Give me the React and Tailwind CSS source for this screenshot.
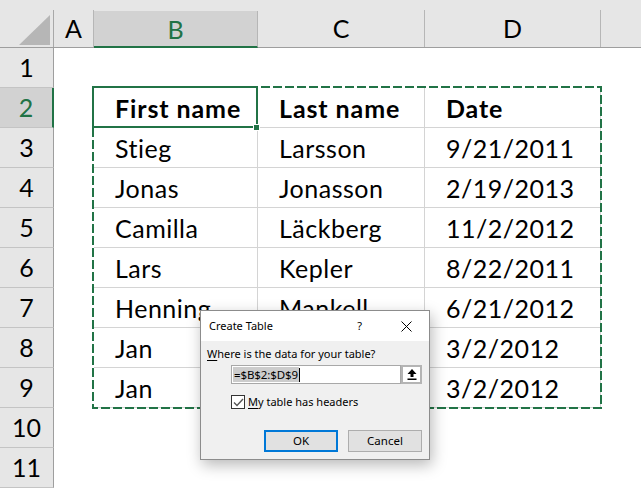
const GREEN = "#217346";

const rows = [
  { n: 1, cells: ["", "", ""] },
  { n: 2, cells: ["First name", "Last name", "Date"], bold: true },
  { n: 3, cells: ["Stieg", "Larsson", "9/21/2011"] },
  { n: 4, cells: ["Jonas", "Jonasson", "2/19/2013"] },
  { n: 5, cells: ["Camilla", "Läckberg", "11/2/2012"] },
  { n: 6, cells: ["Lars", "Kepler", "8/22/2011"] },
  { n: 7, cells: ["Henning", "Mankell", "6/21/2012"] },
  { n: 8, cells: ["Jan", "", "3/2/2012"] },
  { n: 9, cells: ["Jan", "", "3/2/2012"] },
  { n: 10, cells: ["", "", ""] },
  { n: 11, cells: ["", "", ""] },
];

const colWidths = ["w-[164px]", "w-[167px]", "w-[176px]"];

const Dialog = () => (
  <div className="absolute left-[200px] top-[310px] w-[230px] h-[150px] border border-[#8c8c8c] bg-[#f0f0f0] shadow-[2px_5px_14px_rgba(0,0,0,0.28)] font-['Noto_Sans'] text-[11px] text-black flex flex-col">
    <div className="h-[30px] bg-white flex items-center pl-[8px] pr-[17px] shrink-0">
      <span>Create Table</span>
      <span className="ml-auto mr-[39px]">?</span>
      <svg width="11" height="11" viewBox="0 0 11 11">
        <path d="M0.5 0.5 L10.5 10.5 M10.5 0.5 L0.5 10.5" stroke="#000" strokeWidth="1" fill="none" />
      </svg>
    </div>
    <div className="pl-[6px] mt-[5px] leading-[16px]">
      <span className="underline underline-offset-2">W</span>here is the data for your table?
    </div>
    <div className="flex ml-[30px] mt-[3px] h-[19px]">
      <div className="w-[170px] h-full border border-[#a8a8a8] bg-white flex items-center pl-[1px]">
        <span className="bg-[#cccccc] leading-[15px] px-[1px] text-[11.5px] tracking-[-0.1px]">=$B$2:$D$9</span>
        <span className="w-px h-[14px] bg-black"></span>
      </div>
      <div className="w-[21px] h-full border-2 border-[#b4b4b4] bg-white flex items-center justify-center">
        <svg width="10" height="11" viewBox="0 0 10 11">
          <path d="M5 0 L9.5 5 L6.5 5 L6.5 8 L3.5 8 L3.5 5 L0.5 5 Z" fill="#000" />
          <rect x="0.5" y="9.5" width="9" height="1.5" fill="#000" />
        </svg>
      </div>
    </div>
    <div className="flex items-center ml-[30px] mt-[11px] h-[14px]">
      <div className="w-[14px] h-[14px] border border-[#333] bg-white flex items-center justify-center">
        <svg width="11" height="9" viewBox="0 0 11 9">
          <path d="M1 4.5 L4 7.5 L10 1" stroke="#555" strokeWidth="1.4" fill="none" />
        </svg>
      </div>
      <span className="ml-[3px]">
        <span className="underline underline-offset-2">M</span>y table has headers
      </span>
    </div>
    <div className="flex ml-[63px] mt-[21px] gap-[10px] text-[11.5px]">
      <button className="w-[74px] h-[22px] border-2 border-[#0078d7] bg-[#e1e1e1] flex items-center justify-center">OK</button>
      <button className="w-[74px] h-[22px] border border-[#adadad] bg-[#e1e1e1] flex items-center justify-center">Cancel</button>
    </div>
  </div>
);

const App = () => {
  return (
    <div className="relative w-[641px] h-[488px] overflow-hidden bg-white font-['Lato'] text-[25px] text-black">
      {/* column headers */}
      <div className="flex items-end h-[48px] bg-[#e6e6e6] border-b border-[#9e9e9e]">
        <div className="w-[54px] h-[37px] border-r border-[#a8a8a8] flex items-end justify-end pr-[3px] pb-[2px]">
          <svg width="31" height="30" viewBox="0 0 31 30">
            <polygon points="0,30 31,30 31,0" fill="#b6b6b6" />
          </svg>
        </div>
        <div className="w-[40px] h-[37px] border-r border-[#b6b6b6] flex items-center justify-center leading-[37px]">A</div>
        <div className="w-[164px] h-[37px] -mb-px border-r border-[#b6b6b6] bg-[#d2d2d2] border-b-2 border-b-[#217346] text-[#217346] flex items-center justify-center leading-[36px]">B</div>
        <div className="w-[167px] h-[37px] border-r border-[#b6b6b6] flex items-center justify-center leading-[37px]">C</div>
        <div className="w-[176px] h-[37px] border-r border-[#b6b6b6] flex items-center justify-center leading-[37px]">D</div>
        <div className="flex-1 h-[37px]"></div>
      </div>

      {/* rows */}
      {rows.map((r) => {
        const inTable = r.n >= 2 && r.n <= 9;
        const sel = r.n === 2;
        return (
          <div key={r.n} className="flex h-10">
            <div
              className={
                "w-[54px] h-full border-b border-b-[#c4c4c4] flex items-center justify-center leading-[39px] " +
                (sel
                  ? "bg-[#d2d2d2] text-[#217346] border-r-2 border-r-[#217346]"
                  : "bg-[#e6e6e6] border-r border-r-[#9e9e9e]")
              }
            >
              {r.n}
            </div>
            <div className="w-[40px] h-full"></div>
            {r.cells.map((c, i) => (
              <div
                key={i}
                className={
                  colWidths[i] +
                  " h-full pl-[21px] leading-[40px] whitespace-nowrap " +
                  (inTable ? "border-r border-b border-[#d4d4d4] " : "") +
                  (r.bold ? "font-bold tracking-[0.9px]" : "tracking-[0.5px]")
                }
              >
                {c}
              </div>
            ))}
            <div className="flex-1 h-full"></div>
          </div>
        );
      })}

      {/* copy marquee */}
      <svg className="absolute left-[92px] top-[86px]" width="510" height="323" viewBox="0 0 510 323">
        <rect x="1" y="1" width="508" height="321" fill="none" stroke={GREEN} strokeWidth="2" strokeDasharray="9 3" />
      </svg>

      {/* active cell */}
      <div className="absolute left-[92px] top-[86px] w-[166px] h-[42px] border-2 border-[#217346]"></div>
      <div className="absolute left-[253px] top-[124px] w-[7px] h-[7px] bg-[#217346] border border-white"></div>

      <Dialog />
    </div>
  );
};

export default App;
